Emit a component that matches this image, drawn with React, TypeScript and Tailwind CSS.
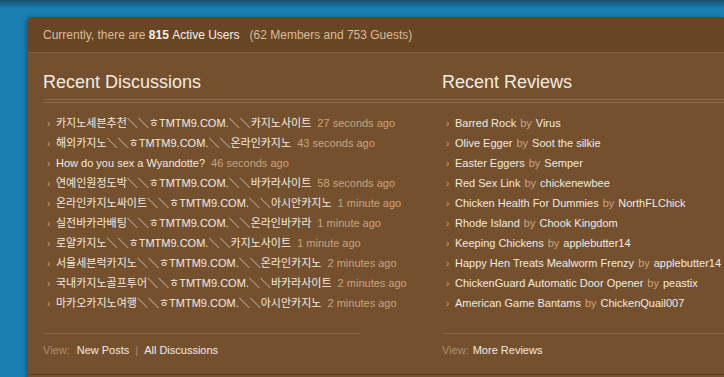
// Who's-online strip with recent discussions and reviews

const discussions = [
  { pre: '카지노세븐추천', post: '카지노사이트', ago: '27 seconds ago' },
  { pre: '해외카지노', post: '온라인카지노', ago: '43 seconds ago' },
  { title: 'How do you sex a Wyandotte?', ago: '46 seconds ago' },
  { pre: '연예인원정도박', post: '바카라사이트', ago: '58 seconds ago' },
  { pre: '온라인카지노싸이트', post: '아시안카지노', ago: '1 minute ago' },
  { pre: '실전바카라배팅', post: '온라인바카라', ago: '1 minute ago' },
  { pre: '로얄카지노', post: '카지노사이트', ago: '1 minute ago' },
  { pre: '서울세븐럭카지노', post: '온라인카지노', ago: '2 minutes ago' },
  { pre: '국내카지노골프투어', post: '바카라사이트', ago: '2 minutes ago' },
  { pre: '마카오카지노여행', post: '아시안카지노', ago: '2 minutes ago' },
];

const reviews = [
  ['Barred Rock', 'Virus'],
  ['Olive Egger', 'Soot the silkie'],
  ['Easter Eggers', 'Semper'],
  ['Red Sex Link', 'chickenewbee'],
  ['Chicken Health For Dummies', 'NorthFLChick'],
  ['Rhode Island', 'Chook Kingdom'],
  ['Keeping Chickens', 'applebutter14'],
  ['Happy Hen Treats Mealworm Frenzy', 'applebutter14'],
  ['ChickenGuard Automatic Door Opener', 'peastix'],
  ['American Game Bantams', 'ChickenQuail007'],
];

const font = { fontFamily: '"Liberation Sans", Arial, "Noto Sans CJK KR", sans-serif' };

function Bullet() {
  return <span className="w-[13px] shrink-0 pl-[4px] pt-[1px] text-[10px] text-[#c9a27a]">›</span>;
}

function Heading({ children }: { children: string }) {
  return (
    <div>
      <h2 className="pt-[19px] text-[18px] leading-[20px] text-[#f3ece2]">{children}</h2>
      <div className="mt-[7px] h-px bg-[#8e6b4b]" />
      <div className="mt-[2px] h-px bg-[#8e6b4b]" />
    </div>
  );
}

export default function App() {
  return (
    <div className="min-h-[377px] bg-[#1b7fb4] overflow-hidden" style={font}>
      <div className="h-[17px] bg-[linear-gradient(to_bottom,#1a4f6c_0px,#1b7fb4_9px)]" />
      <div className="ml-[28px] rounded-tl-[5px] bg-[#74502f] shadow-[-2px_0_4px_rgba(0,0,0,0.3)] overflow-hidden">
        {/* online users bar */}
        <div className="flex h-[35px] items-center bg-[#684524] px-[15px] text-[12px] text-[#d8bd99] whitespace-nowrap">
          Currently, there are&nbsp;
          <b className="text-[#f7f1e8]">815</b>
          <span className="text-[#f7f1e8]">&nbsp;Active Users</span>
          <span className="ml-[10px]">(62 Members and 753 Guests)</span>
        </div>
        <div className="h-px bg-[#86623f]" />

        <div className="flex pl-[15px]">
          {/* left column */}
          <div className="w-[399px] shrink-0">
            <Heading>Recent Discussions</Heading>
            <ul className="mt-[10px] text-[11px] leading-[20px] text-[#f2ebe0]">
              {discussions.map((d, i) => (
                <li key={i} className="flex h-[20px] items-center whitespace-nowrap">
                  <Bullet />
                  {d.title ? (
                    <span>{d.title}</span>
                  ) : (
                    <span>
                      {d.pre}＼＼ㅎTMTM9.COM.＼＼{d.post}
                    </span>
                  )}
                  <span className="ml-[6px] text-[#c9a47c]">{d.ago}</span>
                </li>
              ))}
            </ul>
            <div className="mt-[20px] h-px w-[317px] bg-[#866446]" />
            <div className="mt-[8px] flex h-[16px] items-center text-[11px] text-[#f2ebe0]">
              <span className="text-[#b08f6c]">View:</span>
              <span className="ml-[7px]">New Posts</span>
              <span className="mx-[6px] text-[#a9886a]">|</span>
              <span>All Discussions</span>
            </div>
          </div>

          {/* right column */}
          <div className="flex-1">
            <Heading>Recent Reviews</Heading>
            <ul className="mt-[10px] text-[11px] leading-[20px] text-[#f2ebe0]">
              {reviews.map(([t, by], i) => (
                <li key={i} className="flex h-[20px] items-center whitespace-nowrap">
                  <Bullet />
                  <span>{t}</span>
                  <span className="mx-[4px] text-[#c9a47c]">by</span>
                  <span>{by}</span>
                </li>
              ))}
            </ul>
            <div className="mt-[20px] h-px bg-[#866446]" />
            <div className="mt-[8px] flex h-[16px] items-center text-[11px] text-[#f2ebe0]">
              <span className="text-[#b08f6c]">View:</span>
              <span className="ml-[4px]">More Reviews</span>
            </div>
          </div>
        </div>

        <div className="mt-[16px] h-px bg-[#5c3d20]" />
        <div className="h-[10px] bg-[#74502f]" />
      </div>
    </div>
  );
}
